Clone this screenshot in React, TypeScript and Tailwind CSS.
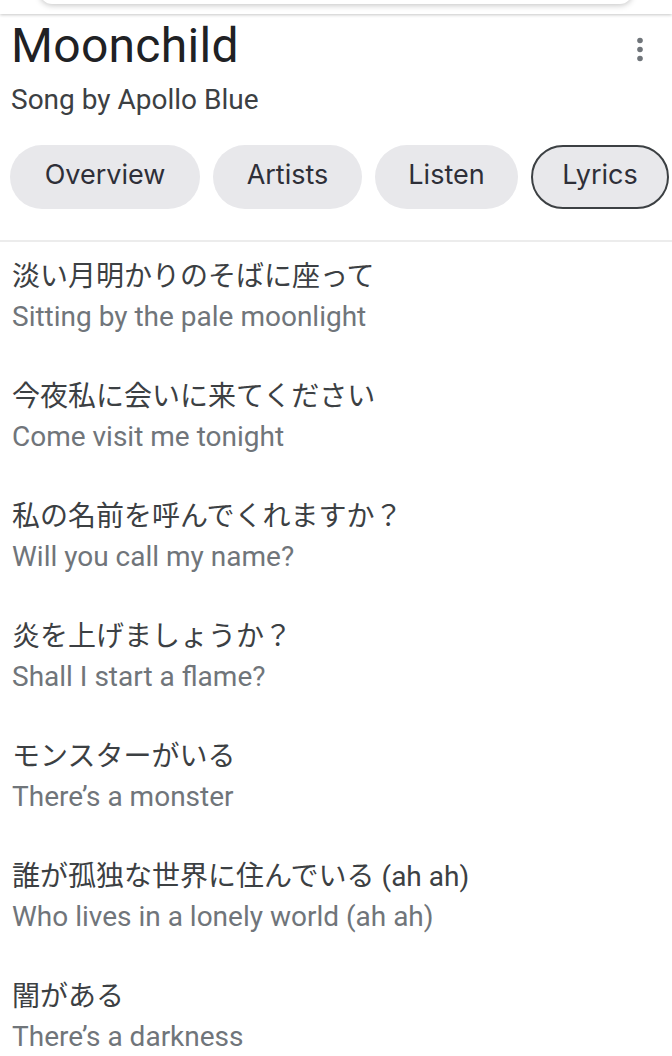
import React from "react";

const lyrics: [string, string][] = [
  ["淡い月明かりのそばに座って", "Sitting by the pale moonlight"],
  ["今夜私に会いに来てください", "Come visit me tonight"],
  ["私の名前を呼んでくれますか？", "Will you call my name?"],
  ["炎を上げましょうか？", "Shall I start a flame?"],
  ["モンスターがいる", "There’s a monster"],
  ["誰が孤独な世界に住んでいる (ah ah)", "Who lives in a lonely world (ah ah)"],
  ["闇がある", "There’s a darkness"],
];

const chips = [
  { label: "Overview", w: "w-[190px]", active: false },
  { label: "Artists", w: "w-[149px]", active: false },
  { label: "Listen", w: "w-[143px]", active: false },
  { label: "Lyrics", w: "w-[138px]", active: true },
];

export default function App() {
  return (
    <div
      className="w-[672px] h-[1056px] overflow-hidden bg-white"
      style={{ fontFamily: "Roboto, 'Noto Sans CJK JP', sans-serif" }}
    >
      {/* top header remnant */}
      <div className="relative h-[14px] bg-white overflow-hidden shadow-[0_1px_3px_rgba(0,0,0,0.22)] z-10">
        <div className="mx-[40px] -mt-[20px] h-[24px] rounded-b-[12px] bg-white shadow-[0_1px_6px_rgba(0,0,0,0.25)]" />
      </div>

      {/* title */}
      <div className="flex items-start justify-between pl-[11px] pr-[29px] pt-[8px]">
        <div className="text-[48px] leading-[48px] text-[#202124] font-normal tracking-[0.3px]">Moonchild</div>
        <svg width="6" height="26" viewBox="0 0 6 26" className="mt-[15px]">
          <circle cx="3" cy="3.5" r="2.8" fill="#70757a" />
          <circle cx="3" cy="12.5" r="2.8" fill="#70757a" />
          <circle cx="3" cy="21.5" r="2.8" fill="#70757a" />
        </svg>
      </div>
      <div className="pl-[11px] mt-[12px] text-[28px] leading-[36px] text-[#3c4043]">
        Song by Apollo Blue
      </div>

      {/* chips */}
      <div className="flex gap-[13px] pl-[10px] mt-[27px]">
        {chips.map((c) => (
          <div
            key={c.label}
            className={`${c.w} h-[64px] shrink-0 rounded-full bg-[#e8e8eb] flex items-center justify-center pb-[4px] text-[27px] text-[#2e2f38] ${
              c.active ? "border-2 border-[#3c4043]" : ""
            }`}
            style={{ fontFamily: "Inter, Roboto, sans-serif" }}
          >
            {c.label}
          </div>
        ))}
      </div>

      <div className="mt-[31px] h-[2px] bg-[#ececec]" />

      {/* lyrics */}
      <div className="pl-[12px] pt-[15px] flex flex-col gap-[40px]">
        {lyrics.map(([jp, en]) => (
          <div key={en} className="flex flex-col">
            <div className="text-[28px] leading-[40px] text-[#3c4043] whitespace-nowrap">{jp}</div>
            <div className="text-[28px] leading-[40px] text-[#70757a] whitespace-nowrap">{en}</div>
          </div>
        ))}
      </div>
    </div>
  );
}
